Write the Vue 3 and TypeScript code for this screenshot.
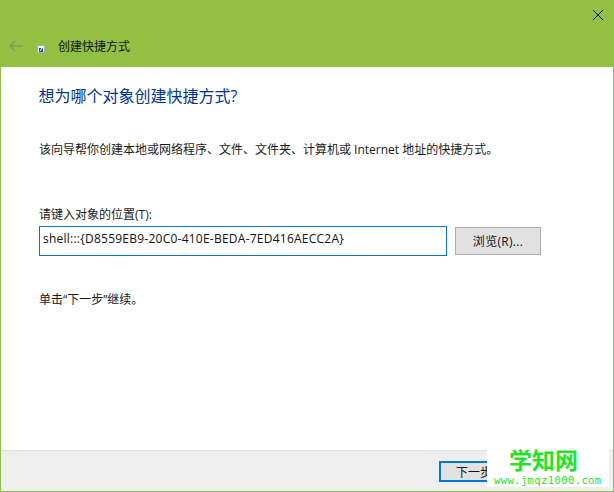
<template>
  <div class="wizard">
    <header class="wizard-header">
      <div class="close-row">
        <svg class="close-icon" width="10" height="10" viewBox="0 0 10 10">
          <path d="M0 0L10 10M10 0L0 10" stroke="#111" stroke-width="1" fill="none" />
        </svg>
      </div>
      <div class="nav-row">
        <svg class="back-icon" width="14" height="12" viewBox="0 0 14 12">
          <path d="M6 1L1 6L6 11M1 6H14" stroke="#7f9f5a" stroke-width="1.6" fill="none" />
        </svg>
        <svg class="shortcut-icon" width="8" height="8" viewBox="0 0 8 8">
          <rect x="0.5" y="0.5" width="7" height="7" fill="#f4f6f8" stroke="#a9b4a0" stroke-width="1" />
          <rect x="2" y="3" width="4" height="4" fill="#2c4f9e" />
          <path d="M3 6L5.5 2.5" stroke="#fff" stroke-width="1" />
        </svg>
        <span class="wizard-title">{{ title }}</span>
      </div>
    </header>

    <main class="wizard-body">
      <h1 class="question">想为哪个对象创建快捷方式?</h1>
      <p class="description">该向导帮你创建本地或网络程序、文件、文件夹、计算机或 Internet 地址的快捷方式。</p>

      <label class="location-label" for="location">请键入对象的位置(T):</label>
      <div class="location-row">
        <input id="location" v-model="location" class="location-input" type="text" />
        <button class="btn browse-btn" type="button">浏览(R)...</button>
      </div>

      <p class="hint">单击“下一步”继续。</p>
    </main>

    <footer class="wizard-footer">
      <button class="btn next-btn" type="button">下一步(N)</button>
    </footer>

    <div class="watermark">
      <div class="watermark-name">学知网</div>
      <div class="watermark-url">www.jmqz1000.com</div>
    </div>
  </div>
</template>

<script setup lang="ts">
import { ref } from 'vue';

const title = ref<string>('创建快捷方式');
const location = ref<string>('shell:::{D8559EB9-20C0-410E-BEDA-7ED416AECC2A}');
</script>

<style scoped>
.wizard {
  position: relative;
  box-sizing: border-box;
  width: 614px;
  height: 492px;
  display: flex;
  flex-direction: column;
  background: #ffffff;
  border: solid #92c043;
  border-width: 0 1px 1px 1px;
  color: #1a1a1a;
  font-family: "Open Sans", "Noto Sans CJK SC", sans-serif;
  font-size: 12px;
  overflow: hidden;
}

.wizard-header {
  flex: 0 0 67px;
  background: #92c043;
  display: flex;
  flex-direction: column;
}

.close-row {
  display: flex;
  justify-content: flex-end;
  padding: 10px 10px 0 0;
}

.close-icon {
  display: block;
}

.nav-row {
  display: flex;
  align-items: center;
  margin-top: 17px;
  padding-left: 8px;
  height: 20px;
}

.back-icon {
  margin-top: -2px;
}

.shortcut-icon {
  margin: 3px 0 0 14px;
}

.wizard-title {
  margin-left: 13px;
  color: #111;
  line-height: 20px;
}

.wizard-body {
  flex: 1;
  padding: 0 0 0 38px;
}

.question {
  margin: 17px 0 0 -0.5px;
  font-size: 16px;
  font-weight: 400;
  line-height: 24px;
  color: #003399;
}

.description {
  margin: 33px 0 0;
  line-height: 18px;
}

.location-label {
  display: block;
  margin-top: 47px;
  line-height: 18px;
}

.location-row {
  display: flex;
  align-items: flex-start;
  gap: 8px;
  margin-top: 2px;
}

.location-input {
  box-sizing: border-box;
  width: 408px;
  height: 30px;
  padding: 0 3px 6px;
  border: 1px solid #0078d7;
  outline: none;
  font: inherit;
  letter-spacing: 0.24px;
  color: #111;
}

.btn {
  box-sizing: border-box;
  width: 86px;
  background: #e1e1e1;
  font: inherit;
  color: #111;
  padding: 0;
}

.browse-btn {
  height: 28px;
  margin-top: 1px;
  border: 1px solid #adadad;
  letter-spacing: 0.3px;
}

.hint {
  margin: 35px 0 0;
  line-height: 18px;
}

.wizard-footer {
  flex: 0 0 41px;
  box-sizing: border-box;
  background: #eeeeee;
  border-top: 1px solid #dfdfdf;
  padding: 10px 0 0 438px;
}

.next-btn {
  display: block;
  height: 21px;
  border: 2px solid #0078d7;
}

.watermark {
  position: absolute;
  left: 486px;
  top: 449px;
  width: 122px;
  height: 38px;
  background: #ffffff;
  color: #1ee61e;
}

.watermark-name {
  font-family: "Noto Sans CJK SC", sans-serif;
  font-size: 23px;
  font-weight: 700;
  line-height: 25px;
  margin: -2px 0 0 22px;
}

.watermark-url {
  font-family: "DejaVu Sans Mono", monospace;
  font-size: 10.5px;
  line-height: 13px;
  letter-spacing: 0.4px;
  margin: 2px 0 0 7px;
  white-space: nowrap;
}
</style>

<style>
html,
body {
  margin: 0;
  background: #ffffff;
}
</style>
